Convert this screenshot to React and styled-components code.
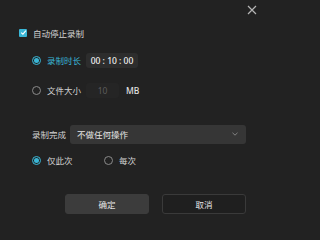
import React from "react";
import styled, { createGlobalStyle } from "styled-components";

const Global = createGlobalStyle`
  html, body {
    margin: 0;
    padding: 0;
    background: #222222;
  }
  body {
    font-family: "Noto Sans CJK SC", "Noto Sans", "Liberation Sans", sans-serif;
    color: #d2d2d2;
  }
`;

const Dialog = styled.div`
  width: 265px;
  height: 238px;
  box-sizing: border-box;
  padding: 0 19px;
  background: #222222;
  display: flex;
  flex-direction: column;
  font-size: 8.5px;
`;

const Header = styled.div`
  height: 20px;
  margin-right: -11px;
  display: flex;
  align-items: center;
  justify-content: flex-end;
`;

const CheckRow = styled.label`
  height: 13px;
  margin-top: 6px;
  display: flex;
  align-items: center;
  gap: 6px;
`;

const Box = styled.span`
  width: 8px;
  height: 8px;
  border-radius: 1px;
  background: #3ab6d6;
  display: flex;
  align-items: center;
  justify-content: center;
`;

const Options = styled.div`
  padding-left: 13px;
  display: flex;
  flex-direction: column;
  gap: 15px;
  margin-top: 13.5px;
`;

const Row = styled.div`
  height: 15px;
  display: flex;
  align-items: center;
`;

const Radio = styled.span`
  width: 9px;
  height: 9px;
  box-sizing: border-box;
  border-radius: 50%;
  border: 1px solid ${({ $on }) => ($on ? "#3ab6d6" : "#8a8a8a")};
  display: flex;
  align-items: center;
  justify-content: center;
  flex: none;
  &::after {
    content: "";
    width: 5px;
    height: 5px;
    border-radius: 50%;
    background: ${({ $on }) => ($on ? "#3ab6d6" : "transparent")};
  }
`;

const Label = styled.span`
  margin-left: 6px;
  color: ${({ $on }) => ($on ? "#3ab6d6" : "#d2d2d2")};
  white-space: nowrap;
`;

const TimeBox = styled.span`
  margin-left: 5px;
  width: 52px;
  height: 15px;
  border-radius: 3px;
  background: #2d2d2d;
  color: #f0f0f0;
  display: flex;
  align-items: center;
  justify-content: center;
  font-family: "Noto Sans", "Liberation Sans", sans-serif;
  font-size: 8.5px;
  font-weight: 500;
`;

const SizeBox = styled.span`
  margin-left: 5px;
  width: 33px;
  height: 15px;
  border-radius: 3px;
  background: #252525;
  color: #5c5c5c;
  display: flex;
  align-items: center;
  justify-content: center;
  font-family: "Noto Sans", "Liberation Sans", sans-serif;
`;

const Unit = styled.span`
  margin-left: 7px;
  color: #e0e0e0;
  font-family: "Noto Sans", "Liberation Sans", sans-serif;
  font-weight: 500;
`;

const SelectRow = styled.div`
  margin-top: 27px;
  padding-left: 13px;
  height: 19px;
  display: flex;
  align-items: center;
  gap: 4px;
`;

const Select = styled.div`
  flex: 1;
  height: 19px;
  border-radius: 3px;
  background: #363636;
  display: flex;
  align-items: center;
  justify-content: space-between;
  padding: 0 8px 0 7px;
  color: #e6e6e6;
`;

const ChoiceRow = styled.div`
  margin-top: 10.5px;
  padding-left: 13px;
  height: 12px;
  display: flex;
  align-items: center;
`;

const Choice = styled.span`
  display: flex;
  align-items: center;
  width: ${({ $w }) => $w}px;
`;

const Buttons = styled.div`
  margin-top: 28px;
  display: flex;
  justify-content: flex-end;
  gap: 13px;
`;

const Button = styled.button`
  width: 84px;
  height: 20px;
  box-sizing: border-box;
  border-radius: 3px;
  font-family: inherit;
  font-size: 8.5px;
  color: #e6e6e6;
  background: ${({ $primary }) => ($primary ? "#3c3c3c" : "#1f1f1f")};
  border: 1px solid ${({ $primary }) => ($primary ? "#3c3c3c" : "#3a3a3a")};
  padding: 0;
`;

export default function App() {
  return (
    <>
      <Global />
      <Dialog>
        <Header>
          <svg width="10" height="10" viewBox="0 0 10 10">
            <path d="M1 1L9 9M9 1L1 9" stroke="#b5b5b5" strokeWidth="1.2" />
          </svg>
        </Header>

        <CheckRow>
          <Box>
            <svg width="7" height="7" viewBox="0 0 7 7">
              <path d="M1.2 3.6L2.9 5.2L5.9 1.6" stroke="#ffffff" strokeWidth="1.1" fill="none" />
            </svg>
          </Box>
          自动停止录制
        </CheckRow>

        <Options>
          <Row>
            <Radio $on />
            <Label $on>录制时长</Label>
            <TimeBox>00 : 10 : 00</TimeBox>
          </Row>
          <Row>
            <Radio />
            <Label>文件大小</Label>
            <SizeBox>10</SizeBox>
            <Unit>MB</Unit>
          </Row>
        </Options>

        <SelectRow>
          录制完成
          <Select>
            不做任何操作
            <svg width="6" height="4" viewBox="0 0 6 4">
              <path d="M0.5 0.8L3 3.2L5.5 0.8" stroke="#8c8c8c" strokeWidth="0.9" fill="none" />
            </svg>
          </Select>
        </SelectRow>

        <ChoiceRow>
          <Choice $w={72}>
            <Radio $on />
            <Label>仅此次</Label>
          </Choice>
          <Choice $w={40}>
            <Radio />
            <Label>每次</Label>
          </Choice>
        </ChoiceRow>

        <Buttons>
          <Button $primary>确定</Button>
          <Button>取消</Button>
        </Buttons>
      </Dialog>
    </>
  );
}
